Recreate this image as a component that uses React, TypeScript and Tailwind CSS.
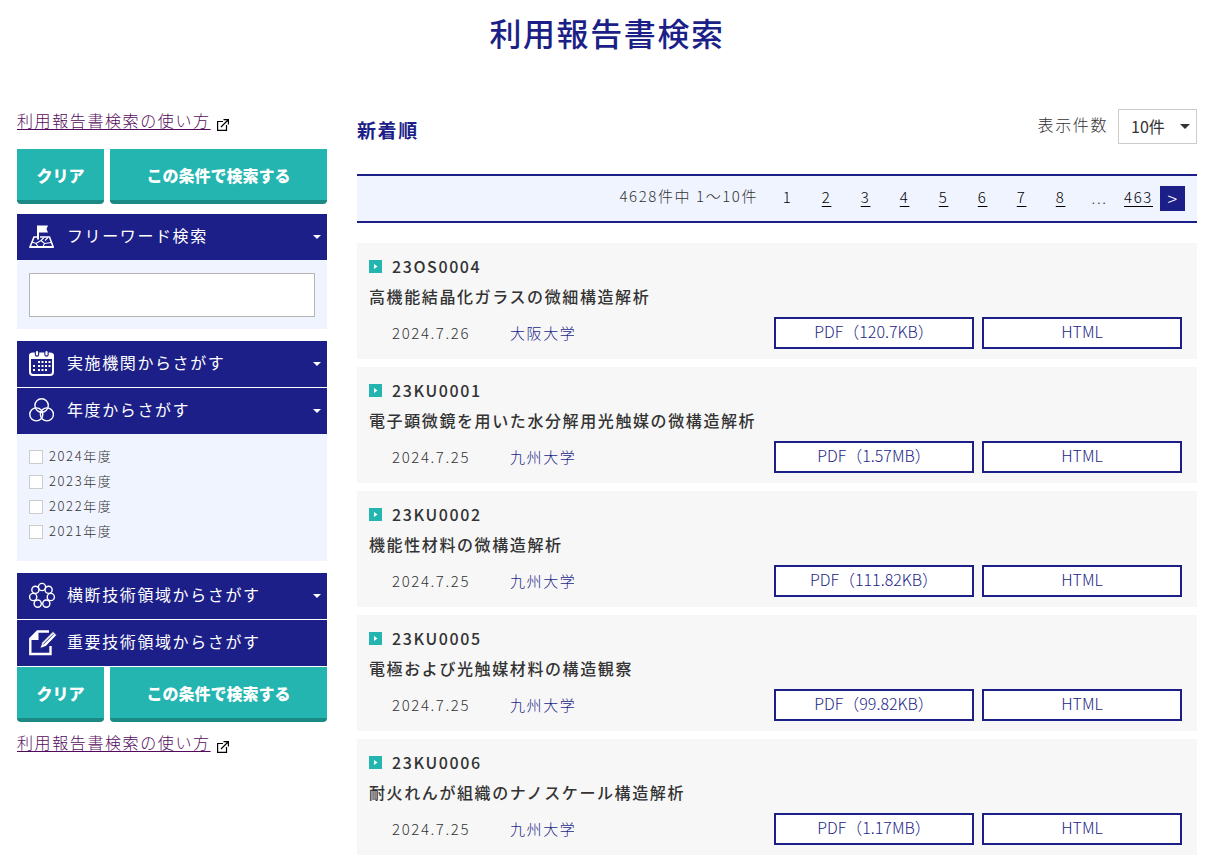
import { useState, type ReactNode } from "react";

type Report = { id: string; title: string; date: string; org: string; size: string };

const reports: Report[] = [
  { id: "23OS0004", title: "高機能結晶化ガラスの微細構造解析", date: "2024.7.26", org: "大阪大学", size: "120.7KB" },
  { id: "23KU0001", title: "電子顕微鏡を用いた水分解用光触媒の微構造解析", date: "2024.7.25", org: "九州大学", size: "1.57MB" },
  { id: "23KU0002", title: "機能性材料の微構造解析", date: "2024.7.25", org: "九州大学", size: "111.82KB" },
  { id: "23KU0005", title: "電極および光触媒材料の構造観察", date: "2024.7.25", org: "九州大学", size: "99.82KB" },
  { id: "23KU0006", title: "耐火れんが組織のナノスケール構造解析", date: "2024.7.25", org: "九州大学", size: "1.17MB" },
];

const years = ["2024年度", "2023年度", "2022年度", "2021年度"];
const pages = ["2", "3", "4", "5", "6", "7", "8"];

function FlagIcon() {
  return (
    <svg viewBox="0 0 28 28" className="size-7 shrink-0" fill="none" stroke="white" strokeWidth="1.3" aria-hidden="true">
      <path d="M9 2.500v14" strokeWidth="2" />
      <path d="M10 2.500h9l-1.500 3.500 1.500 3.500h-9z" fill="white" stroke="none" />
      <path d="M8 14H5L1.200 23.500M11 14h9.500L24 23.500" strokeWidth="1.600" />
      <path d="M0.300 24h24.500" strokeWidth="2" />
      <path d="M3 19l4 1.500 5-3 3-3M7 20.500l2 3M12 17.500l3.500 3 7-1M15.500 20.500l-1.500 3M19 14.500l-3 3" strokeWidth="1.100" />
    </svg>
  );
}

function CalendarIcon() {
  const dots = [
    [10, 12], [13.500, 12], [17, 12], [20.500, 12],
    [5, 16], [10, 16], [13.500, 16], [17, 16], [20.500, 16],
    [5, 20], [10, 20], [13.500, 20], [17, 20],
  ];
  return (
    <svg viewBox="0 0 28 28" className="size-7 shrink-0" aria-hidden="true">
      <rect x="1" y="3.500" width="23" height="21.500" rx="3" fill="none" stroke="white" strokeWidth="2" />
      <path d="M0 9V6a3 3 0 0 1 3-3h19a3 3 0 0 1 3 3v3z" fill="white" />
      <g stroke="#1c1f87" strokeWidth="4.400" strokeLinecap="round"><path d="M8 2v2.500M17.500 2v2.500" /></g>
      <g stroke="white" strokeWidth="2.200" strokeLinecap="round"><path d="M8 2v2.500M17.500 2v2.500" /></g>
      {dots.map(([x, y]) => <rect key={`${x}-${y}`} x={x - 1} y={y - 1} width="2" height="2" fill="white" />)}
    </svg>
  );
}

function CirclesIcon() {
  return (
    <svg viewBox="0 0 28 28" className="size-7 shrink-0" fill="none" stroke="white" strokeWidth="1.400" aria-hidden="true">
      <circle cx="12.600" cy="8.500" r="6.700" />
      <circle cx="7.300" cy="17.400" r="6.500" />
      <circle cx="17.900" cy="17.400" r="6.500" />
    </svg>
  );
}

function RingIcon() {
  const nodes = [[13, 5], [19.600, 7.800], [21.800, 15], [17.300, 21.600], [8.700, 21.600], [4.200, 15], [6.400, 7.800]];
  return (
    <svg viewBox="0 0 28 28" className="size-7 shrink-0" fill="none" stroke="white" strokeWidth="1.400" aria-hidden="true">
      {nodes.map(([x, y]) => <circle key={`${x}-${y}`} cx={x} cy={y} r="3.600" />)}
    </svg>
  );
}

function NoteIcon() {
  return (
    <svg viewBox="0 0 28 28" className="size-7 shrink-0" fill="none" stroke="white" aria-hidden="true">
      <path d="M20 2.500H8.500L1.300 9.700V25H21.500V17" strokeWidth="2.400" />
      <path d="M9.500 2v9H1z" fill="white" stroke="none" />
      <path d="M11 19.500l2-6L24 2.500l3.600 3.600L17 17.300z" fill="white" stroke="#1c1f87" strokeWidth=".8" />
      <path d="M14.200 15.500L24.600 5.100" stroke="#1c1f87" strokeWidth=".9" />
    </svg>
  );
}

function HelpLink() {
  return (
    <a href="#help" className="flex items-center gap-1.5 text-base leading-6 font-light text-[#540a5c]">
      <span className="underline underline-offset-2">利用報告書検索の使い方</span>
      <svg viewBox="0 0 12 12" className="mt-2.5 size-3" fill="none" stroke="black" aria-hidden="true">
        <path d="M6 2.500H.6v8.900h8.900V6M4 8L11 1M6.500.6H11.400V5.500" strokeWidth="1.200" />
      </svg>
    </a>
  );
}

function SearchButtons() {
  return (
    <div className="flex gap-1.5 text-base font-black tracking-normal text-white">
      <button type="reset" className="h-[55px] w-[87px] rounded-b-[4px] border-b-4 border-[#1b8a85] bg-[#24b5b1]">クリア</button>
      <button type="submit" className="h-[55px] flex-1 rounded-b-[4px] border-b-4 border-[#1b8a85] bg-[#24b5b1]">この条件で検索する</button>
    </div>
  );
}

function PanelHeader({ icon, children, caret = true, open, onClick }: {
  icon: ReactNode; children: ReactNode; caret?: boolean; open?: boolean; onClick?: () => void;
}) {
  return (
    <button type="button" aria-expanded={open} onClick={onClick} className="flex h-[46px] w-full items-center gap-2.5 bg-[#1c1f87] pr-1.5 pl-3 text-left tracking-widest text-white">
      {icon}
      <span className="flex-1 pb-1">{children}</span>
      {caret && <svg viewBox="0 0 8 4" className="h-1 w-2" fill="white" aria-hidden="true"><path d="M0 0h8L4 4z" /></svg>}
    </button>
  );
}

function ReportCard({ report }: { report: Report }) {
  const button = "flex h-8 w-[200px] items-center justify-center border-2 border-[#1c1f87] bg-white pb-1 text-base font-light tracking-normal";
  return (
    <li className="bg-[#f7f7f7] pt-[11px] pr-[15px] pb-2.5 pl-3">
      <h3 className="flex h-6 items-center gap-2.5 font-medium">
        <svg viewBox="0 0 13 13" className="size-[13px]" aria-hidden="true">
          <path d="M0 0h13v13H0z" fill="#24b5b1" /><path d="M5 4l3.500 2.500L5 9z" fill="white" />
        </svg>
        {report.id}
      </h3>
      <p className="mt-1.5 leading-6 font-medium">{report.title}</p>
      <div className="mt-[9px] flex items-center pl-[23px] text-[15px] font-light">
        <span className="w-[118px]">{report.date}</span>
        <span className="flex-1 text-[#1c1f87]">{report.org}</span>
        <div className="flex gap-2 text-[#1c1f87]">
          <a href={`#${report.id}-pdf`} className={button}>PDF（{report.size}）</a>
          <a href={`#${report.id}`} className={button}>HTML</a>
        </div>
      </div>
    </li>
  );
}

export default function App() {
  const [wordOpen, setWordOpen] = useState(true);
  const [yearOpen, setYearOpen] = useState(true);
  return (
    <div className="bg-white pr-[19px] pb-1.5 pl-[17px] font-['Noto_Sans_CJK_JP',sans-serif] text-base tracking-widest text-[#333]">
      <h1 className="pt-2 text-center text-[32px] leading-[48px] font-medium tracking-wider text-[#1c1f87]">利用報告書検索</h1>
      <div className="mt-[53px] flex items-start gap-[30px]">
        <form className="-mt-px w-[310px] shrink-0" onSubmit={(e) => e.preventDefault()}>
          <HelpLink />
          <div className="mt-[17px]"><SearchButtons /></div>
          <section className="mt-2.5">
            <PanelHeader icon={<FlagIcon />} open={wordOpen} onClick={() => setWordOpen(!wordOpen)}>フリーワード検索</PanelHeader>
            {wordOpen && (
              <div className="bg-[#f0f4ff] px-3 pt-[13px] pb-3">
                <input type="text" aria-label="フリーワード検索" className="block h-11 w-full border border-[#b5b5b5] bg-white px-3" />
              </div>
            )}
          </section>
          <section className="mt-3 flex flex-col gap-px">
            <PanelHeader icon={<CalendarIcon />}>実施機関からさがす</PanelHeader>
            <div>
              <PanelHeader icon={<CirclesIcon />} open={yearOpen} onClick={() => setYearOpen(!yearOpen)}>年度からさがす</PanelHeader>
              {yearOpen && (
                <div className="flex flex-col gap-[5px] bg-[#f0f4ff] px-3 pt-3 pb-5">
                  {years.map((y) => (
                    <label key={y} className="flex h-5 items-center gap-1.5 text-[13px] font-light">
                      <input type="checkbox" className="mt-0.5 size-3.5 appearance-none border border-[#ccc] bg-white checked:bg-[#1c1f87]" />
                      {y}
                    </label>
                  ))}
                </div>
              )}
            </div>
          </section>
          <section className="mt-3 flex flex-col gap-px">
            <PanelHeader icon={<RingIcon />}>横断技術領域からさがす</PanelHeader>
            <PanelHeader icon={<NoteIcon />} caret={false}>重要技術領域からさがす</PanelHeader>
            <SearchButtons />
          </section>
          <div className="mt-2"><HelpLink /></div>
        </form>

        <main className="min-w-0 flex-1">
          <div className="flex h-[65px] items-start justify-between">
            <h2 className="pt-[7px] text-[19px] leading-7 font-bold text-[#1c1f87]">新着順</h2>
            <div className="flex gap-2.5">
              <label htmlFor="per-page" className="pt-[3px] leading-6 font-light">表示件数</label>
              <div className="relative">
                <select id="per-page" className="block h-[35px] w-[79px] appearance-none border border-[#ccc] bg-white pb-0.5 pl-3 text-base tracking-normal">
                  <option>10件</option>
                  <option>20件</option>
                  <option>50件</option>
                </select>
                <svg viewBox="0 0 10 5" className="pointer-events-none absolute top-[15px] right-[7px] h-[5px] w-2.5" fill="#333" aria-hidden="true"><path d="M0 0h10L5 5z" /></svg>
              </div>
            </div>
          </div>
          <nav className="flex h-[49px] items-center justify-end border-y-2 border-[#1c1f87] bg-[#f0f4ff] pr-3 text-[15px] font-light">
            <span className="mr-2.5 pb-1">4628件中 1～10件</span>
            <span className="w-[39px] pb-0.5 text-center text-black">1</span>
            {pages.map((p) => (
              <span key={p} className="w-[39px] pb-0.5 text-center">
                <a href={`#page-${p}`} className="text-black underline underline-offset-3">{p}</a>
              </span>
            ))}
            <span className="w-[39px] text-center">...</span>
            <a href="#page-463" className="mr-[7px] ml-[5px] pb-0.5 text-black underline underline-offset-3">463</a>
            <a href="#next" aria-label="次のページ" className="flex size-[25px] items-center justify-center bg-[#1c1f87] pb-0.5 pl-px text-lg text-white">&gt;</a>
          </nav>
          <ul className="mt-5 flex flex-col gap-2">
            {reports.map((r) => <ReportCard key={r.id} report={r} />)}
          </ul>
        </main>
      </div>
    </div>
  );
}
